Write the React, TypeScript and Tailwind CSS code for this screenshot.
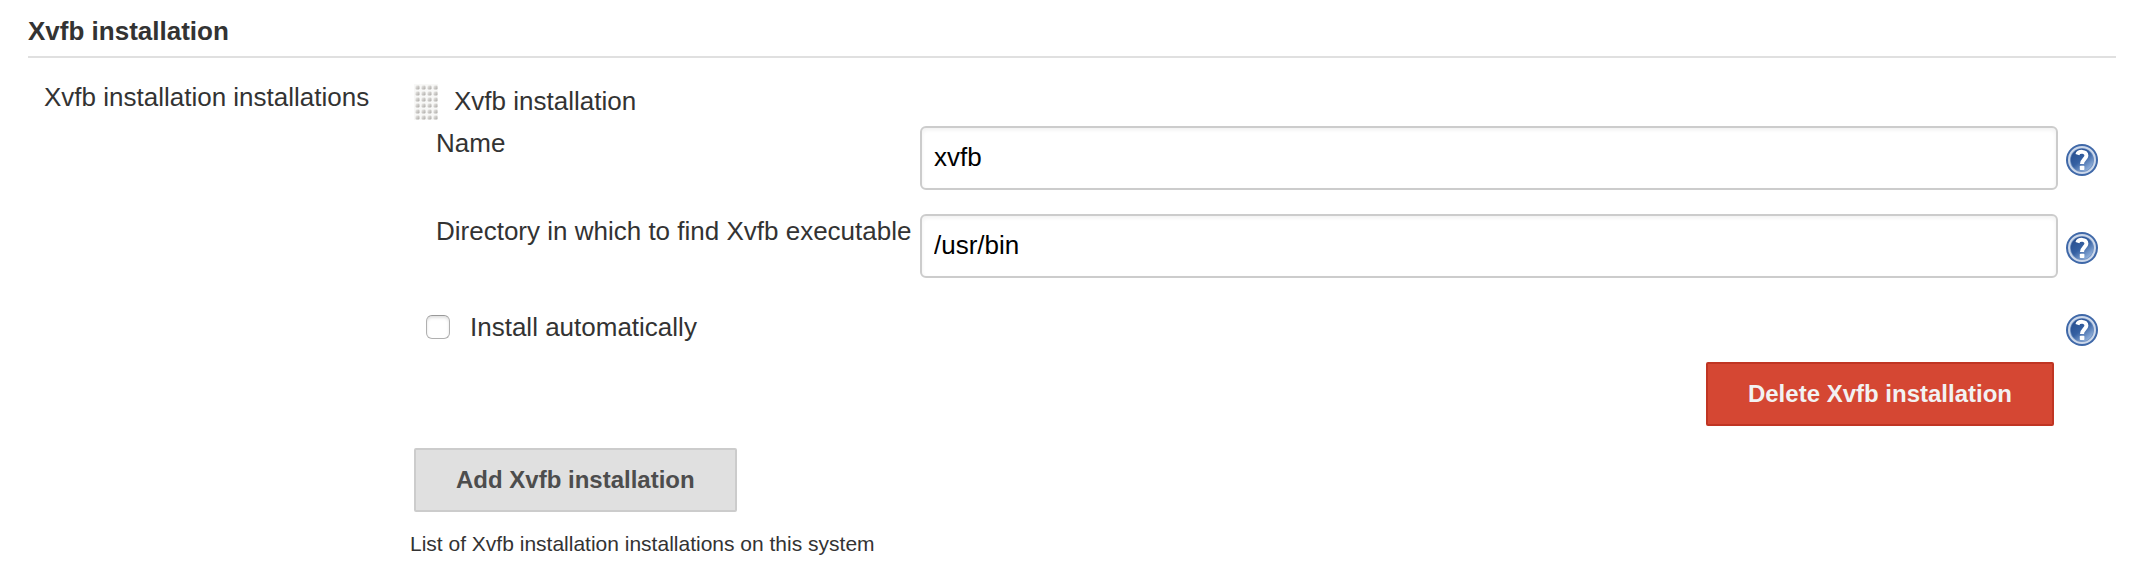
import { useId, useState } from "react";

interface HelpButtonProps {
  topic: string;
}

function HelpButton({ topic }: HelpButtonProps) {
  const id = useId();

  return (
    <button type="button" aria-label={`Help for feature: ${topic}`} className="block h-8 w-8 shrink-0 cursor-pointer">
      <svg viewBox="0 0 32 32" className="h-8 w-8" aria-hidden="true">
        <defs>
          <linearGradient id={id} x1="0.2" y1="0.15" x2="0.8" y2="0.9">
            <stop offset="0" stopColor="#2a5293" />
            <stop offset="0.45" stopColor="#3560a2" />
            <stop offset="1" stopColor="#8fafda" />
          </linearGradient>
        </defs>
        <circle cx="16" cy="16" r="16" fill="#3f68a8" />
        <circle cx="16" cy="16" r="13" fill="#6f8fc0" stroke="#ccd8ea" strokeWidth="2" />
        <circle cx="16" cy="16" r="11.2" fill={`url(#${id})`} />
        <path
          d="M11.4 10.6C12.4 7 20.6 6.6 20.4 11.6C20.2 15 16 15.4 16 20"
          fill="none"
          stroke="#fff"
          strokeWidth="4"
        />
        <rect x="13.8" y="21.8" width="4.6" height="4.2" rx="0.8" fill="#fff" />
      </svg>
    </button>
  );
}

function DragHandle() {
  const id = useId();

  return (
    <svg width="24" height="36" className="shrink-0 cursor-move" aria-hidden="true">
      <defs>
        <linearGradient id={`${id}-dot`} x1="0" y1="0" x2="1" y2="1">
          <stop offset="0" stopColor="#efeeec" />
          <stop offset="1" stopColor="#a9a7a3" />
        </linearGradient>
        <pattern id={id} width="6" height="6" patternUnits="userSpaceOnUse">
          <rect width="6" height="6" fill="#f8f8f7" />
          <rect x="1.5" y="1.5" width="4" height="4" rx="1.2" fill={`url(#${id}-dot)`} />
        </pattern>
      </defs>
      <rect width="24" height="36" fill={`url(#${id})`} />
    </svg>
  );
}

interface TextRowProps {
  id: string;
  label: string;
  value: string;
  onChange: (value: string) => void;
}

function TextRow({ id, label, value, onChange }: TextRowProps) {
  return (
    <div className="flex items-start pb-6">
      <label htmlFor={id} className="w-[484px] shrink-0 pt-0.5">
        {label}
      </label>
      <input
        id={id}
        type="text"
        value={value}
        onChange={(e) => onChange(e.target.value)}
        className="h-16 min-w-0 flex-1 rounded-md border-2 border-[#ccc] bg-white px-3 pb-0.5 text-black shadow-[inset_0_2px_4px_rgba(0,0,0,0.06)] outline-none focus:border-[#66afe9]"
      />
      <div className="ml-2 pt-[18px]">
        <HelpButton topic={label} />
      </div>
    </div>
  );
}

export default function App() {
  const [name, setName] = useState("xvfb");
  const [home, setHome] = useState("/usr/bin");
  const [autoInstall, setAutoInstall] = useState(false);

  return (
    <main className="bg-white pt-4 pr-8 pl-7 font-['Liberation_Sans',Arial,sans-serif] text-[26px] leading-[30px] text-[#333]">
      <h2 className="border-b-2 border-[#e0e0e0] pb-2.5 font-bold">Xvfb installation</h2>

      <div className="flex pt-6 pl-4">
        <div className="w-[366px] shrink-0">Xvfb installation installations</div>

        <div className="min-w-0 flex-1">
          <div className="pt-0.5 pr-[18px]">
            <div className="flex items-start gap-4 pb-1.5 pl-1">
              <DragHandle />
              <span className="pt-0.5">Xvfb installation</span>
            </div>

            <div className="pl-[26px]">
              <TextRow id="xvfb-name" label="Name" value={name} onChange={setName} />
              <TextRow
                id="xvfb-home"
                label="Directory in which to find Xvfb executable"
                value={home}
                onChange={setHome}
              />
            </div>

            <div className="flex items-start justify-between pt-2.5 pl-4">
              <label className="flex items-center gap-5">
                <input
                  type="checkbox"
                  checked={autoInstall}
                  onChange={(e) => setAutoInstall(e.target.checked)}
                  className="h-6 w-6 appearance-none rounded-md border border-[#b0b0b0] border-t-[#999] bg-white shadow-[inset_0_2px_3px_rgba(0,0,0,0.12)] checked:bg-[#3b82f6]"
                />
                Install automatically
              </label>
              <div className="pt-0.5">
                <HelpButton topic="Install automatically" />
              </div>
            </div>

            <div className="flex justify-end pt-4 pr-11">
              <button
                type="button"
                className="h-16 cursor-pointer rounded-xs border-2 border-[#c03523] bg-[#d54733] px-10 text-2xl font-bold text-[#f2f2f2]"
              >
                Delete Xvfb installation
              </button>
            </div>
          </div>

          <button
            type="button"
            className="mt-[22px] ml-1 h-16 cursor-pointer rounded-xs border-2 border-[#ccc] bg-[#e0e0e0] px-10 text-2xl font-bold text-[#4d4d4d]"
          >
            Add Xvfb installation
          </button>

          <p className="pt-5 text-[21px] leading-6">List of Xvfb installation installations on this system</p>
        </div>
      </div>
    </main>
  );
}
